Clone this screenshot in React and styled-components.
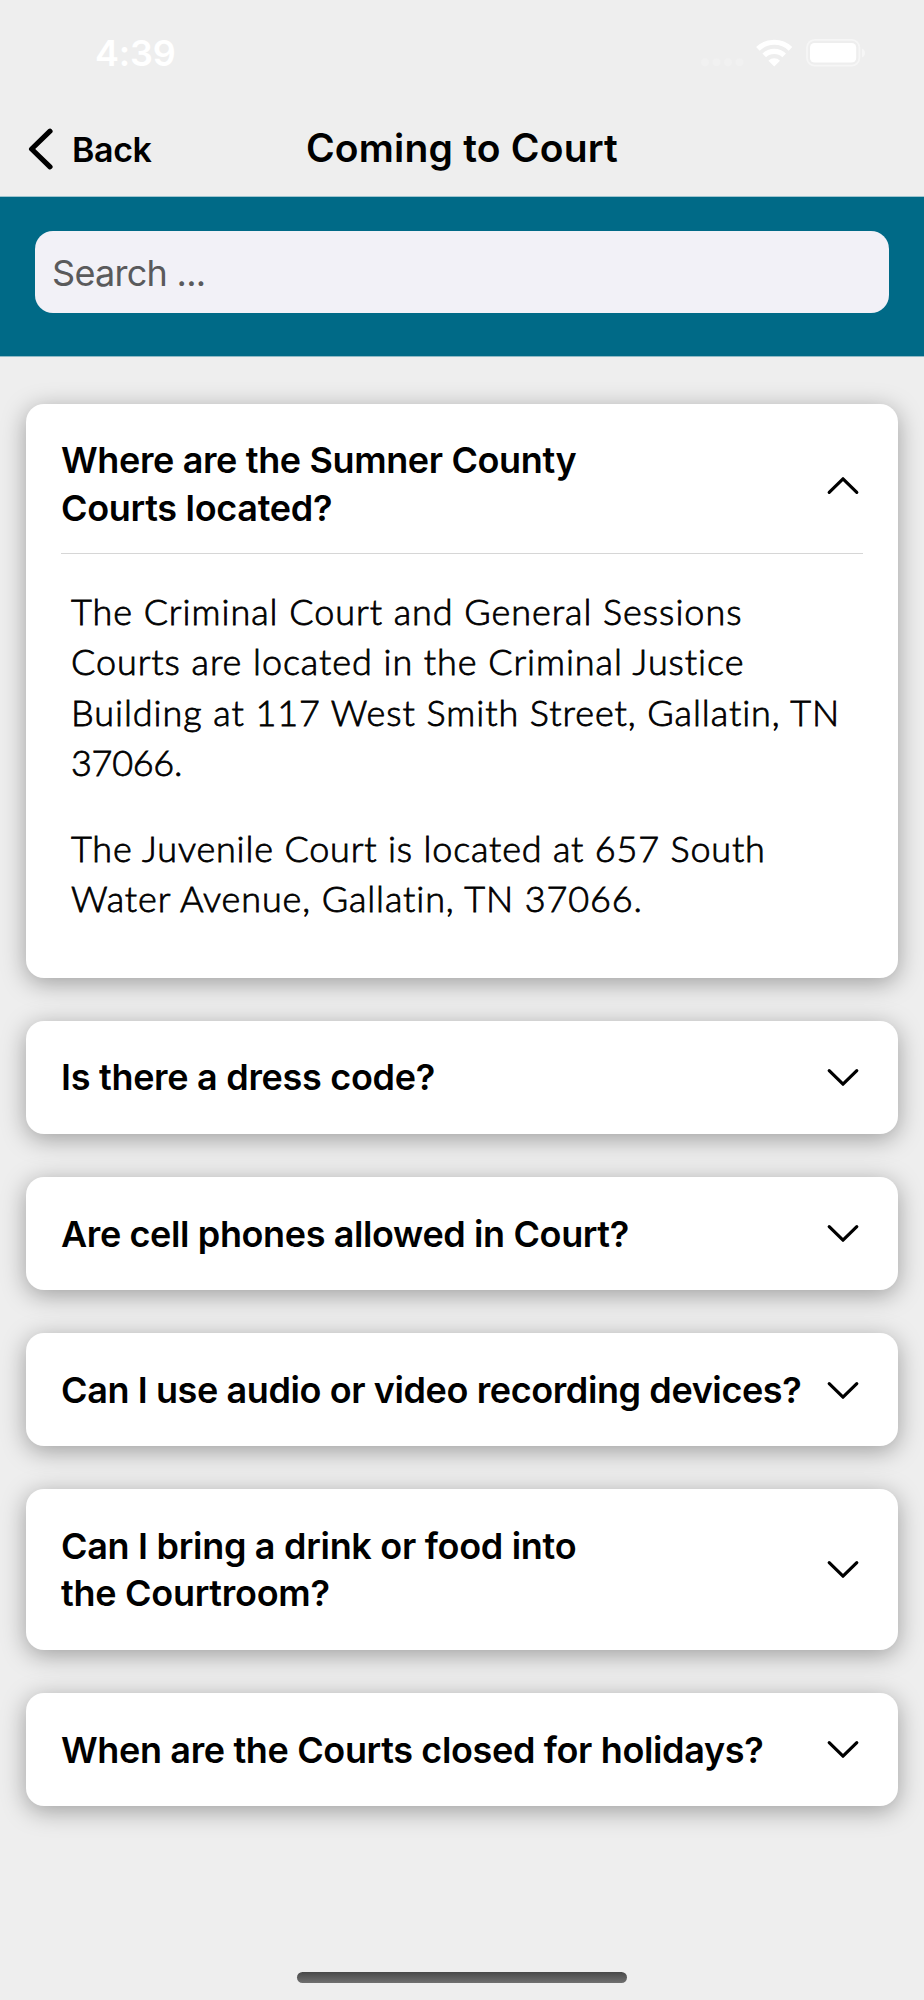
import React, { useState } from "react";
import styled, { createGlobalStyle } from "styled-components";

const GlobalStyle = createGlobalStyle`
  *, *::before, *::after { box-sizing: border-box; }
  body {
    margin: 0;
    background: #eeeeee;
    color: #000;
    font-family: Inter, "Liberation Sans", sans-serif;
  }
`;

const Screen = styled.div`
  display: flex;
  flex-direction: column;
  width: 924px;
  height: 2000px;
  overflow: hidden;
  background: #eeeeee;
`;

const StatusBar = styled.header`
  display: flex;
  align-items: center;
  justify-content: space-between;
  flex: none;
  height: 105px;
  padding: 0 58px 0 95px;
  color: #fff;
`;

const Clock = styled.span`
  font-size: 36px;
  font-weight: 600;
  line-height: 44px;
  letter-spacing: -0.2px;
`;

const StatusIcons = styled.div`
  display: flex;
  align-items: center;
`;

const SignalDots = styled.svg`
  width: 44px;
  height: 28px;
  margin-right: 12px;
`;

const WifiGlyph = styled.svg`
  width: 37px;
  height: 28px;
  margin-right: 13px;
`;

const BatteryGlyph = styled.svg`
  width: 60px;
  height: 28px;
`;

const NavBar = styled.nav`
  display: grid;
  grid-template-columns: 1fr auto 1fr;
  align-items: center;
  flex: none;
  height: 91px;
  padding: 0 26px 2px;
`;

const BackButton = styled.button`
  display: flex;
  align-items: center;
  gap: 16px;
  padding: 0;
  border: 0;
  background: none;
  color: inherit;
  font: inherit;
  font-size: 34px;
  font-weight: 600;
  line-height: 42px;
  letter-spacing: -0.4px;
`;

const BackChevron = styled.svg`
  width: 30px;
  height: 44px;
`;

const PageTitle = styled.h1`
  margin: 0;
  padding-bottom: 3px;
  font-size: 39px;
  font-weight: 600;
  line-height: 48px;
  letter-spacing: 0.2px;
`;

const SearchBand = styled.section`
  flex: none;
  height: 161px;
  padding: 34px 35px 0;
  background: #006a87;
  border-top: 1px solid #9fc5cf;
  border-bottom: 1px solid #8fbac6;
`;

const SearchInput = styled.input`
  display: block;
  width: 100%;
  height: 82px;
  padding: 2px 17px 0 17px;
  border: 0;
  border-radius: 18px;
  outline: 0;
  background: #f2f1f7;
  color: #000;
  font-family: inherit;
  font-size: 36px;
  letter-spacing: -0.72px;
  &::placeholder {
    color: #5a5a5c;
    opacity: 1;
  }
`;

const FaqList = styled.main`
  display: flex;
  flex-direction: column;
  gap: 43.2px;
  flex: 1;
  padding: 46.7px 26px 0;
`;

const Card = styled.article`
  flex: none;
  padding: 0 35px;
  border-radius: 18px;
  background: #fff;
  box-shadow: 0 5px 25px rgba(0, 0, 0, 0.34);
`;

const Question = styled.button`
  display: flex;
  align-items: center;
  justify-content: space-between;
  width: 100%;
  padding: 33.6px 0 ${(p) => (p.$open ? "20.9px" : "32px")};
  border: 0;
  border-bottom: ${(p) => (p.$open ? "1px solid #d6d6d6" : "0")};
  background: none;
  color: inherit;
  font: inherit;
  font-size: 36px;
  font-weight: 600;
  line-height: 47.4px;
  text-align: left;
`;

const QuestionText = styled.span`
  display: block;
`;

const Line = styled.span`
  display: block;
  white-space: nowrap;
  letter-spacing: ${(p) => p.$tracking}px;
`;

const Chevron = styled.svg`
  flex: none;
  width: 34px;
  height: 22px;
  margin-right: 3px;
  transform: ${(p) => (p.$open ? "rotate(180deg)" : "none")};
`;

const Answer = styled.div`
  display: flex;
  flex-direction: column;
  gap: 35.5px;
  padding: 32px 10px 54.4px;
  font-family: Lato, "Open Sans", sans-serif;
  font-size: 36px;
  font-weight: 300;
  line-height: 50.3px;
  -webkit-text-stroke: 0.8px #000;
`;

const Paragraph = styled.p`
  margin: 0;
`;

const HomeArea = styled.footer`
  display: flex;
  justify-content: center;
  flex: none;
  height: 28px;
`;

const HomeIndicator = styled.div`
  width: 330px;
  height: 11px;
  border-radius: 6px;
  background: linear-gradient(#484848, #707070);
`;

const faqs = [
  {
    question: [
      ["Where are the Sumner County", -0.37],
      ["Courts located?", -0.3],
    ],
    answer: [
      [
        ["The Criminal Court and General Sessions", 0.96],
        ["Courts are located in the Criminal Justice", 0.94],
        ["Building at 117 West Smith Street, Gallatin, TN", 0.94],
        ["37066.", -0.3],
      ],
      [
        ["The Juvenile Court is located at 657 South", 0.82],
        ["Water Avenue, Gallatin, TN 37066.", 0.89],
      ],
    ],
  },
  { question: [["Is there a dress code?", -0.3]] },
  { question: [["Are cell phones allowed in Court?", -0.38]] },
  { question: [["Can I use audio or video recording devices?", -0.4]] },
  {
    question: [
      ["Can I bring a drink or food into", -0.3],
      ["the Courtroom?", -0.28],
    ],
  },
  { question: [["When are the Courts closed for holidays?", -0.36]] },
];

function Lines({ lines }) {
  return lines.map(([text, tracking]) => (
    <Line key={text} $tracking={tracking}>
      {text}
    </Line>
  ));
}

function FaqCard({ item, open, onToggle }) {
  return (
    <Card>
      <Question $open={open} onClick={onToggle} aria-expanded={open}>
        <QuestionText>
          <Lines lines={item.question} />
        </QuestionText>
        <Chevron $open={open} viewBox="0 0 34 22" fill="none" stroke="#000" strokeWidth="3.2" strokeLinecap="round" strokeLinejoin="round">
          <path d="M3.2 3.6 17 17.2 30.8 3.6" />
        </Chevron>
      </Question>
      {open && item.answer && (
        <Answer>
          {item.answer.map((lines) => (
            <Paragraph key={lines[0][0]}>
              <Lines lines={lines} />
            </Paragraph>
          ))}
        </Answer>
      )}
    </Card>
  );
}

export default function App() {
  const [openIndex, setOpenIndex] = useState(0);

  return (
    <Screen>
      <GlobalStyle />
      <StatusBar>
        <Clock>4:39</Clock>
        <StatusIcons>
          <SignalDots viewBox="0 0 44 28" fill="#f1f1f1">
            <circle cx="5" cy="23.3" r="4" />
            <circle cx="16.5" cy="23.3" r="4" />
            <circle cx="28" cy="23.3" r="4" />
            <circle cx="39.5" cy="23.3" r="4" />
          </SignalDots>
          <WifiGlyph viewBox="0 0 37 28" fill="none" stroke="#fff" strokeWidth="5.2">
            <path d="M1.9 9.8a23.6 23.6 0 0 1 32.6 0" />
            <path d="M8.2 16.4a14.4 14.4 0 0 1 20 0" />
            <path d="M18.2 27.4l-5.8-5.7a8.2 8.2 0 0 1 11.6 0z" fill="#fff" stroke="none" />
          </WifiGlyph>
          <BatteryGlyph viewBox="0 0 60 28">
            <rect x="1" y="0.9" width="52.4" height="25.8" rx="7.8" fill="none" stroke="#f6f6f6" strokeWidth="1.8" />
            <rect x="4" y="4" width="46.2" height="19.6" rx="4.6" fill="#fff" />
            <path d="M56 9.4q3 1.3 3 4.5t-3 4.5z" fill="#f6f6f6" />
          </BatteryGlyph>
        </StatusIcons>
      </StatusBar>
      <NavBar>
        <BackButton>
          <BackChevron viewBox="0 0 30 44" fill="none" stroke="#000" strokeWidth="5.2" strokeLinecap="round" strokeLinejoin="round">
            <path d="M24 3.2 5.6 21 24 38.8" />
          </BackChevron>
          Back
        </BackButton>
        <PageTitle>Coming to Court</PageTitle>
      </NavBar>
      <SearchBand>
        <SearchInput placeholder="Search ..." />
      </SearchBand>
      <FaqList>
        {faqs.map((item, index) => (
          <FaqCard
            key={item.question[0][0]}
            item={item}
            open={index === openIndex}
            onToggle={() => setOpenIndex(index === openIndex ? -1 : index)}
          />
        ))}
      </FaqList>
      <HomeArea>
        <HomeIndicator />
      </HomeArea>
    </Screen>
  );
}
